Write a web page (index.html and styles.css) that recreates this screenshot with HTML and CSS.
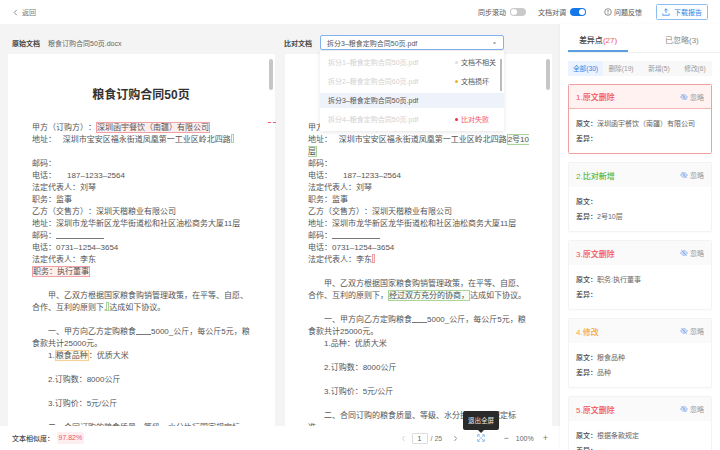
FILE: index.html
```html
<!DOCTYPE html>
<html lang="zh">
<head>
<meta charset="utf-8">
<title>文档比对</title>
<link rel="stylesheet" href="styles.css">
</head>
<body>
<div class="app">
  <header class="topbar">
    <div class="back">
      <svg class="chev" viewBox="0 0 6 8"><path d="M4.5 .8 1.5 4l3 3.2" fill="none" stroke="#777" stroke-width="1"/></svg>
      <span>返回</span>
    </div>
    <div class="tools">
      <span class="tool-label">同步滚动</span><span class="toggle"><i></i></span>
      <span class="tool-label swap">文档对调</span><span class="toggle on"><i></i></span>
      <span class="help">
        <svg viewBox="0 0 8 8" class="help-ic"><circle cx="4" cy="4" r="3.3" fill="none" stroke="#666" stroke-width=".7"/><path d="M4 2v2.6M4 5.4v.8" stroke="#666" stroke-width=".8"/></svg>
        问题反馈
      </span>
      <span class="download">
        <svg viewBox="0 0 10 10" class="dl-ic"><path d="M5 1v5.2M3 3l2-2 2 2M1 7v2h8V7" fill="none" stroke="#2f86e6" stroke-width="1"/></svg>
        下载报告
      </span>
    </div>
  </header>

  <div class="content">
    <main class="main">
      <div class="docs">
        <section class="col">
          <div class="doc-head left-head"><b>原始文档</b><span class="fname">粮食订购合同50页.docx</span></div>
          <div class="page">
            <span class="thumb"></span>
            <h1>粮食订购合同50页</h1>
            <p>甲方（订购方）：<span class="hl del">深圳函宇餐饮（南疆）有限公司</span></p>
            <p>地址：   深圳市宝安区福永街道凤凰第一工业区岭北四路<i class="gap add"></i></p>
            <p>&nbsp;</p>
            <p>邮码：</p>
            <p>电话：     187–1233–2564</p>
            <p>法定代表人：刘琴</p>
            <p>职务：监事</p>
            <p>乙方（交售方）：深圳天楷粮业有限公司</p>
            <p>地址：深圳市龙华新区龙华街道松和社区油松商务大厦11层</p>
            <p>邮码：<span class="blank"></span></p>
            <p>电话：0731–1254–3654</p>
            <p>法定代表人：李东</p>
            <p><span class="hl del">职务：执行董事</span></p>
            <p>&nbsp;</p>
            <p class="ind">甲、乙双方根据国家粮食购销管理政策，在平等、自愿、合作、互利的原则下,<i class="gap add"></i>达成如下协议。</p>
            <p>&nbsp;</p>
            <p class="ind">一、甲方向乙方定购粮食<span class="blank short"></span>5000_公斤，每公斤5元，粮食款共计25000元。</p>
            <p class="ind1">1.<span class="hl mod">粮食品种</span>：优质大米</p>
            <p>&nbsp;</p>
            <p class="ind1">2.订购数：8000公斤</p>
            <p>&nbsp;</p>
            <p class="ind1">3.订购价：5元/公斤</p>
            <p>&nbsp;</p>
            <p class="ind">二、合同订购的粮食质量、等级、水分执行国家规定标准。</p>
          </div>
        </section>
        <span class="link-dash"></span>
        <section class="col">
          <div class="doc-head right-head">
            <b>比对文档</b>
            <div class="select">
              <span>拆分3–粮食定购合同50页.pdf</span>
              <svg viewBox="0 0 6 4" class="caret"><path d="M.8 3 3 1l2.2 2z" fill="#777"/></svg>
              <div class="dropdown">
                <span class="dd-thumb"></span>
                <div class="opt muted"><span>拆分1–粮食定购合同50页.pdf</span><span class="st"><i class="dot grey"></i>文档不相关</span></div>
                <div class="opt muted"><span>拆分2–粮食定购合同60页.pdf</span><span class="st"><i class="dot amber"></i>文档损坏</span></div>
                <div class="opt sel"><span>拆分3–粮食定购合同50页.pdf</span></div>
                <div class="opt muted"><span>拆分4–粮食定购合同50页.pdf</span><span class="st fail"><i class="dot red"></i>比对失败</span></div>
              </div>
            </div>
          </div>
          <div class="page page-r">
            <span class="thumb"></span>
            <h1>粮食订购合同50页</h1>
            <p>甲方（订购方）：深圳函宇餐饮（南疆）有限公司</p>
            <p>地址：   深圳市宝安区福永街道凤凰第一工业区岭北四路<span class="hl add">2号10层</span></p>
            <p>邮码：</p>
            <p>电话：     187–1233–2564</p>
            <p>法定代表人：刘琴</p>
            <p>职务：监事</p>
            <p>乙方（交售方）：深圳天楷粮业有限公司</p>
            <p>地址：深圳市龙华新区龙华街道松和社区油松商务大厦11层</p>
            <p>邮码：<span class="blank"></span></p>
            <p>电话：0731–1254–3654</p>
            <p>法定代表人：李东<i class="gap del"></i></p>
            <p>&nbsp;</p>
            <p class="ind">甲、乙双方根据国家粮食购销管理政策，在平等、自愿、合作、互利的原则下，<span class="hl add">经过双方充分的协商，</span>达成如下协议。</p>
            <p>&nbsp;</p>
            <p class="ind">一、甲方向乙方定购粮食<span class="blank short"></span>5000_公斤，每公斤5元，粮食款共计25000元。</p>
            <p class="ind1">1.品种：优质大米</p>
            <p>&nbsp;</p>
            <p class="ind1">2.订购数：8000公斤</p>
            <p>&nbsp;</p>
            <p class="ind1">3.订购价：5元/公斤</p>
            <p>&nbsp;</p>
            <p class="ind">二、合同订购的粮食质量、等级、水分执行国家规定标准。</p>
          </div>
        </section>
      </div>
      <footer class="bottombar">
        <div class="sim"><b>文本相似度：</b><span class="badge">97.82%</span></div>
        <div class="pager">
          <svg viewBox="0 0 6 8" class="pg-ic"><path d="M4.3 1 1.7 4l2.6 3" fill="none" stroke="#bbb" stroke-width=".8"/></svg>
          <span class="pg-input">1</span>
          <span class="pg-total">/ 25</span>
          <svg viewBox="0 0 6 8" class="pg-ic next"><path d="M1.7 1l2.6 3-2.6 3" fill="none" stroke="#666" stroke-width=".8"/></svg>
          <svg viewBox="0 0 10 10" class="fs-ic"><path d="M1 3.4V1h2.4M6.6 1H9v2.4M9 6.6V9H6.6M3.4 9H1V6.6M3 3 4.2 4.2M7 3 5.8 4.2M7 7 5.8 5.8M3 7l1.2-1.2" fill="none" stroke="#2f86e6" stroke-width=".9"/></svg>
          <span class="zoom-btn minus">−</span>
          <span class="zoom-val">100%</span>
          <span class="zoom-btn plus">+</span>
        </div>
        <div class="tooltip">退出全屏</div>
      </footer>
    </main>

    <aside class="side">
      <div class="tabs">
        <div class="tab active">差异点<em>(27)</em></div>
        <div class="tab second">已忽略(3)</div>
      </div>
      <div class="filters">
        <span class="f on">全部(30)</span><span class="f">删除(19)</span><span class="f">新增(5)</span><span class="f">修改(6)</span>
      </div>
      <article class="card current">
        <div class="card-head"><b class="t-del">1.原文删除</b><span class="ignore"><svg viewBox="0 0 10 10" class="eye"><use href="#eye"/></svg>忽略</span></div>
        <div class="card-body"><p><b>原文：</b>深圳函宇餐饮（南疆）有限公司</p><p><b>差异：</b></p></div>
      </article>
      <article class="card">
        <div class="card-head"><b class="t-add">2.比对新增</b><span class="ignore"><svg viewBox="0 0 10 10" class="eye"><use href="#eye"/></svg>忽略</span></div>
        <div class="card-body"><p><b>原文：</b></p><p><b>差异：</b>2号10层</p></div>
      </article>
      <article class="card">
        <div class="card-head"><b class="t-del">3.原文删除</b><span class="ignore"><svg viewBox="0 0 10 10" class="eye"><use href="#eye"/></svg>忽略</span></div>
        <div class="card-body"><p><b>原文：</b>职务:执行董事</p><p><b>差异：</b></p></div>
      </article>
      <article class="card">
        <div class="card-head"><b class="t-mod">4.修改</b><span class="ignore"><svg viewBox="0 0 10 10" class="eye"><use href="#eye"/></svg>忽略</span></div>
        <div class="card-body"><p><b>原文：</b>粮食品种</p><p><b>差异：</b>品种</p></div>
      </article>
      <article class="card">
        <div class="card-head"><b class="t-del">5.原文删除</b><span class="ignore"><svg viewBox="0 0 10 10" class="eye"><use href="#eye"/></svg>忽略</span></div>
        <div class="card-body"><p><b>原文：</b>根据条款规定</p><p><b>差异：</b></p></div>
      </article>
    </aside>
  </div>
</div>
<svg class="defs" width="0" height="0">
  <symbol id="eye" viewBox="0 0 10 10">
    <path d="M.8 5C2 3 3.4 2.2 5 2.2S8 3 9.2 5C8 7 6.6 7.8 5 7.8S2 7 .8 5z" fill="none" stroke="#6f9fe8" stroke-width=".9"/>
    <circle cx="5" cy="5" r="1.4" fill="none" stroke="#6f9fe8" stroke-width=".8"/>
    <path d="M1.8 1.4 8.4 8.6" stroke="#6f9fe8" stroke-width=".9"/>
  </symbol>
</svg>
</body>
</html>
```
FILE: styles.css
```css
* { box-sizing: border-box; }
html, body { margin: 0; padding: 0; }
body {
  width: 720px;
  height: 450px;
  overflow: hidden;
  font-family: "Liberation Sans", "Noto Sans CJK SC", sans-serif;
  font-size: 7px;
  color: #555;
  background: #fff;
  text-spacing-trim: space-all;
}
p, h1 { margin: 0; }
.defs { display: block; }
.app { display: flex; flex-direction: column; height: 450px; }

/* top bar */
.topbar {
  height: 24px;
  flex: none;
  display: flex;
  align-items: center;
  justify-content: space-between;
  padding: 0 12px 0 13px;
  background: #fff;
}
.back { display: flex; align-items: center; gap: 4px; color: #777; }
.chev { width: 5px; height: 7px; }
.tools { display: flex; align-items: center; }
.tool-label { color: #555; }
.toggle {
  width: 16px;
  height: 8px;
  margin-left: 4px;
  border-radius: 4px;
  background: #c9c9c9;
  position: relative;
  display: block;
}
.toggle i {
  position: absolute;
  left: 1px;
  top: 1px;
  width: 6px;
  height: 6px;
  border-radius: 50%;
  background: #fff;
}
.toggle.on { background: #1677e8; }
.toggle.on i { left: 9px; }
.swap { margin-left: 12px; }
.help { display: flex; align-items: center; gap: 2px; margin-left: 18px; color: #555; }
.help-ic { width: 8px; height: 8px; }
.download {
  display: flex;
  align-items: center;
  justify-content: center;
  gap: 4px;
  width: 52px;
  height: 16px;
  margin-left: 14px;
  border: 1px solid #8fbdf0;
  border-radius: 1.5px;
  color: #2f86e6;
  background: #fbfdff;
}
.dl-ic { width: 8px; height: 8px; }

/* main */
.content { flex: 1; display: flex; min-height: 0; }
.main {
  width: 560px;
  flex: none;
  display: flex;
  flex-direction: column;
  background: #f4f4f4;
}
.docs {
  flex: 1;
  min-height: 0;
  display: flex;
  gap: 10px;
  padding: 0 8px;
  position: relative;
}
.col { width: 267px; flex: none; display: flex; flex-direction: column; min-height: 0; }
.doc-head { height: 30px; flex: none; display: flex; align-items: center; padding-top: 8px; padding-bottom: 1px; }
.doc-head b { font-weight: 600; color: #444; }
.left-head { padding-left: 4px; }
.right-head { margin-left: -1px; }
.fname { margin-left: 8px; color: #666; }
.select {
  position: relative;
  width: 184px;
  height: 15px;
  margin-left: 8px;
  padding-left: 6px;
  display: flex;
  align-items: center;
  border: 1px solid #7fb2ee;
  border-radius: 2px;
  background: #fff;
  color: #555;
}
.caret { position: absolute; right: 6px; top: 5px; width: 5px; height: 3.5px; }
.dropdown {
  position: absolute;
  z-index: 5;
  left: -1px;
  top: 15px;
  width: 184px;
  padding: 3.5px 0 4.5px;
  display: flex;
  flex-direction: column;
  gap: 4px;
  background: #fff;
  box-shadow: 0 1px 5px rgba(0, 0, 0, .1);
}
.dd-thumb {
  position: absolute;
  right: 2px;
  top: 8px;
  width: 2px;
  height: 32px;
  background: #bbb;
}
.opt {
  height: 15px;
  padding: 0 8px;
  display: flex;
  align-items: center;
  justify-content: space-between;
}
.muted > span:first-child { color: #d2d2d2; }
.sel { background: #edf2fb; color: #555; }
.st { width: 41px; display: flex; align-items: center; gap: 3px; color: #555; white-space: nowrap; }
.st.fail { color: #f0556a; }
.dot { width: 3px; height: 3px; border-radius: 50%; flex: none; }
.grey { background: #ddd; }
.amber { background: #eeb02a; }
.red { background: #e83040; }

.page {
  flex: 1;
  min-height: 0;
  position: relative;
  overflow: hidden;
  background: #fff;
  padding: 35px 21px 0 24px;
  font-size: 8px;
  line-height: 12px;
  color: #555;
}
.page-r { padding-left: 23px; padding-right: 22px; }
.page p { white-space: pre-wrap; }
.thumb {
  position: absolute;
  right: 2px;
  top: 5px;
  width: 4px;
  height: 31px;
  border-radius: 2px;
  background: #c6c6c6;
}
h1 {
  height: 33px;
  margin-right: 4px;
  text-align: center;
  font-size: 12px;
  line-height: 12px;
  font-weight: 600;
  color: #333;
}
.ind { text-indent: 16px; }
.ind1 { padding-left: 16px; }
.hl { border: 1px solid; padding: 0; }
.del { border-color: #f3a0a4; background: #fdeeee; }
.add { border-color: #a9d59a; background: #f6fbf3; }
.mod { border-color: #f5cf95; background: #fff9ef; }
.gap {
  display: inline-block;
  width: 3px;
  height: 9px;
  border-width: 1px;
  border-style: solid;
  vertical-align: -1px;
}
.blank { display: inline-block; width: 48px; border-bottom: 1px solid #777; height: 9px; vertical-align: -1px; }
.blank.short { width: 15px; }
.link-dash {
  position: absolute;
  left: 268px;
  top: 98px;
  width: 8px;
  border-top: 1px dashed #f0606a;
}

/* bottom bar */
.bottombar {
  height: 24px;
  flex: none;
  position: relative;
  z-index: 6;
  display: flex;
  align-items: center;
  justify-content: space-between;
  padding: 0 12px;
  background: #fff;
}
.sim { display: flex; align-items: center; }
.sim b { font-weight: 500; color: #444; }
.badge {
  margin-left: 3px;
  padding: 0 1.5px;
  height: 12px;
  line-height: 12px;
  background: #fdeef0;
  border-radius: 2px;
  color: #ef5a6a;
}
.pager { display: flex; align-items: center; color: #777; }
.pg-ic { width: 5px; height: 7px; }
.pg-input {
  width: 16px;
  height: 11px;
  margin-left: 6px;
  border: 1px solid #ddd;
  border-radius: 1px;
  text-align: center;
  line-height: 9px;
  color: #555;
}
.pg-total { margin-left: 3px; width: 18px; }
.next { margin-left: 4px; }
.fs-ic { width: 8px; height: 8px; margin-left: 19px; }
.zoom-btn { font-size: 9px; color: #777; line-height: 9px; }
.minus { margin-left: 19px; }
.zoom-val { margin-left: 7px; color: #666; }
.plus { margin-left: 9px; }
.tooltip {
  position: absolute;
  left: 463px;
  top: -15px;
  width: 36px;
  height: 19px;
  border-radius: 2px;
  background: #2a2a2a;
  color: #e8e8e8;
  font-size: 6.5px;
  line-height: 19px;
  text-align: center;
}
.tooltip::after {
  content: "";
  position: absolute;
  left: 15px;
  bottom: -3px;
  border-left: 3px solid transparent;
  border-right: 3px solid transparent;
  border-top: 3px solid #2a2a2a;
}

/* sidebar */
.side {
  width: 160px;
  flex: none;
  padding: 0 8px;
  overflow: hidden;
  background: #fff;
  box-shadow: -1px 0 3px rgba(0, 0, 0, .03);
  position: relative;
  z-index: 7;
}
.tabs {
  display: flex;
  height: 29px;
  margin-right: -8px;
  border-bottom: 1px solid #eee;
  font-size: 8px;
}
.tab { height: 28px; line-height: 34px; color: #888; }
.tab.active {
  width: 60px;
  text-align: center;
  font-weight: 500;
  color: #444;
  border-bottom: 2px solid #5a9fe0;
}
.tab em { font-style: normal; color: #f0556a; }
.second { padding-left: 37px; }
.filters {
  display: flex;
  height: 15px;
  margin-top: 8px;
  background: #f8f8f8;
  border-radius: 1.5px;
  color: #999;
  font-size: 6.67px;
  line-height: 15px;
}
.f { text-align: center; width: 36px; }
.f:nth-child(3) { width: 40px; }
.f:nth-child(4) { width: 32px; }
.f.on { width: 35px; background: #eaf3ff; color: #2f86e6; border-radius: 1.5px; }
.card {
  height: 70px;
  margin-top: 8px;
  border: 1px solid #f3f3f3;
  border-radius: 1.5px;
  box-shadow: 0 1px 2px rgba(0, 0, 0, .02);
}
.current { border-color: #f0a0a0; }
.card-head {
  height: 24px;
  display: flex;
  align-items: center;
  justify-content: space-between;
  padding: 0 7px;
  background: #fafafa;
  font-size: 8px;
}
.current .card-head { background: #fff2f1; border-bottom: 1px solid #f3b4b4; }
.card-head b { font-weight: 500; }
.t-del { color: #f2505f; }
.t-add { color: #5cb83c; }
.t-mod { color: #f4a93a; }
.ignore { display: flex; align-items: center; gap: 2px; font-size: 7px; color: #999; }
.eye { width: 8px; height: 8px; }
.card-body { padding: 7px 7px 0; line-height: 15px; color: #666; }
.card-body b { font-weight: 500; color: #444; }
```
